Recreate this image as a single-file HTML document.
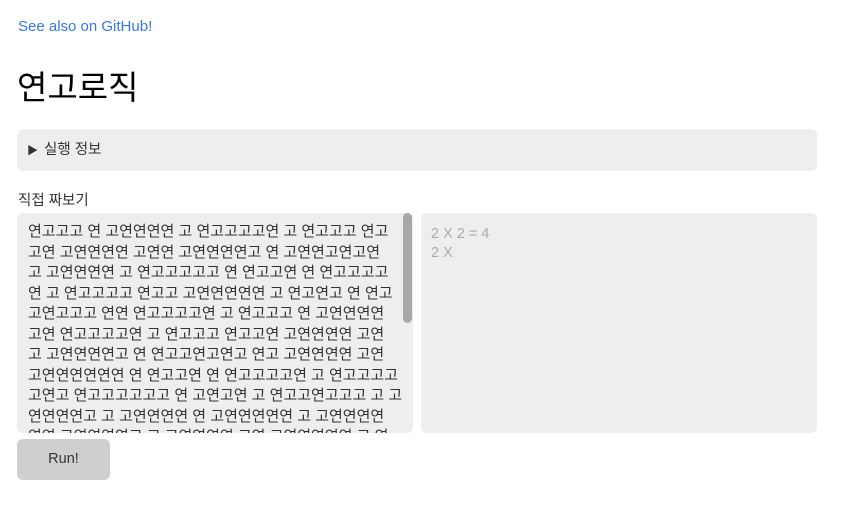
<!DOCTYPE html>
<html><head><meta charset="utf-8"><style>
body{margin:0;background:#fff;font-family:"Liberation Sans","Noto Sans CJK KR",sans-serif;color:#222;width:851px;height:511px;overflow:hidden;position:relative}
.a{position:absolute}
#gh{left:18px;top:18px;font-size:15px;color:#3b7ad0}
#h1{left:17px;top:64px;font-size:33px;font-weight:normal;color:#000;line-height:48px}
#det{left:17px;top:129px;width:800px;height:42px;background:#eeeeee;border-radius:6px;font-size:14.5px;color:#333;line-height:42px}
#det span{margin-left:10px;font-size:11px;margin-right:6px}
#lab{left:18px;top:189px;font-size:14.5px;color:#333}
#code{left:17px;top:213px;width:396px;height:220px;background:#eeeeee;border-radius:6px;overflow:hidden}
#code .t{position:absolute;left:11px;top:9px;font-size:15px;line-height:20.5px;white-space:nowrap;color:#333}
#sb{left:403px;top:213px;width:9px;height:110px;background:#a8a8a8;border-radius:5px}
#out{left:421px;top:213px;width:396px;height:220px;background:#eeeeee;border-radius:6px}
#out .t{position:absolute;left:10px;top:12px;font-size:14.5px;line-height:19px;color:#aaa}
#run{left:17px;top:439px;width:93px;height:41px;background:#cfcfcf;border-radius:6px;text-align:center;line-height:41px;font-size:14.5px;color:#333}
</style></head><body>
<div class="a" id="gh">See also on GitHub!</div>
<div class="a" id="h1">연고로직</div>
<div class="a" id="det"><span>▶</span>실행 정보</div>
<div class="a" id="lab">직접 짜보기</div>
<div class="a" id="code"><div class="t">연고고고 연 고연연연연 고 연고고고고연 고 연고고고 연고<br>고연 고연연연연 고연연 고연연연연고 연 고연연고연고연<br>고 고연연연연 고 연고고고고고 연 연고고연 연 연고고고고<br>연 고 연고고고고 연고고 고연연연연연 고 연고연고 연 연고<br>고연고고고 연연 연고고고고연 고 연고고고 연 고연연연연<br>고연 연고고고고연 고 연고고고 연고고연 고연연연연 고연<br>고 고연연연연고 연 연고고연고연고 연고 고연연연연 고연<br>고연연연연연연 연 연고고연 연 연고고고고연 고 연고고고고<br>고연고 연고고고고고고 연 고연고연 고 연고고연고고고 고 고<br>연연연연고 고 고연연연연 연 고연연연연연 고 고연연연연<br>연연 고연연연연고 고 고연연연연 고연 고연연연연연 고 연</div></div>
<div class="a" id="sb"></div>
<div class="a" id="out"><div class="t">2 X 2 = 4<br>2 X</div></div>
<div class="a" id="run">Run!</div>
</body></html>
